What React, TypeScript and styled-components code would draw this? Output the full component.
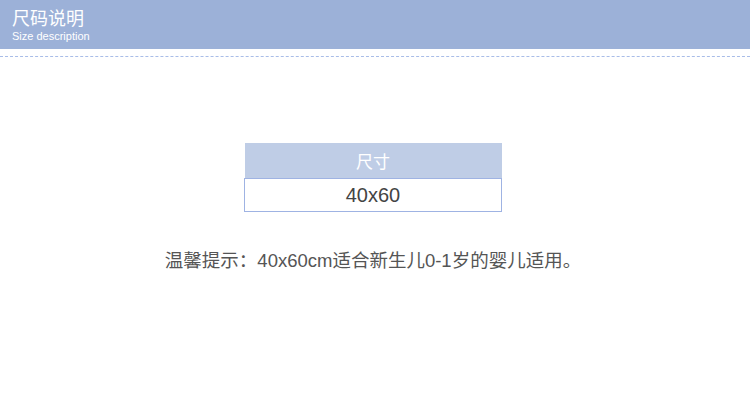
import styled, { createGlobalStyle } from 'styled-components'

const GlobalStyle = createGlobalStyle`
  html, body {
    margin: 0;
    padding: 0;
    background: #ffffff;
  }
  body {
    font-family: "Liberation Sans", Arial, "Noto Sans CJK SC", sans-serif;
  }
`

const Page = styled.div`
  width: 750px;
  height: 407px;
  background: #ffffff;
  overflow: hidden;
`

const Banner = styled.header`
  height: 49px;
  box-sizing: border-box;
  padding: 5px 12px 0;
  background-color: #9cb1d8;
  color: #ffffff;
  display: flex;
  flex-direction: column;
`

const Title = styled.h1`
  margin: 0;
  font-size: 18px;
  line-height: 24px;
  font-weight: normal;
  font-family: "Noto Sans CJK SC", sans-serif;
`

const Subtitle = styled.span`
  font-size: 11px;
  line-height: 14px;
`

const Divider = styled.div`
  margin-top: 7px;
  border-top: 1px dashed #a9bde8;
`

const Content = styled.main`
  display: flex;
  flex-direction: column;
  align-items: center;
  padding-top: 86px;
  padding-right: 4px;
`

const SizeTable = styled.table`
  width: 258px;
  border-collapse: collapse;
  text-align: center;
`

const HeadCell = styled.th`
  height: 35px;
  padding: 0;
  background-color: #bfcde6;
  color: #ffffff;
  font-size: 17px;
  font-weight: normal;
  font-family: "Noto Sans CJK SC", sans-serif;
`

const BodyCell = styled.td`
  height: 32px;
  padding: 0;
  border: 1px solid #9fb3e3;
  color: #444444;
  font-size: 20px;
`

const Tip = styled.p`
  margin: 38px 0 0;
  color: #555555;
  font-size: 18.5px;
  line-height: 22px;
  font-family: "Liberation Sans", "Noto Sans CJK SC", sans-serif;
`

export default function App() {
  return (
    <Page>
      <GlobalStyle />
      <Banner>
        <Title>{'尺码说明'}</Title>
        <Subtitle>{'Size description'}</Subtitle>
      </Banner>
      <Divider />
      <Content>
        <SizeTable>
          <thead>
            <tr>
              <HeadCell>{'尺寸'}</HeadCell>
            </tr>
          </thead>
          <tbody>
            <tr>
              <BodyCell>{'40x60'}</BodyCell>
            </tr>
          </tbody>
        </SizeTable>
        <Tip>{'温馨提示：40x60cm适合新生儿0-1岁的婴儿适用。'}</Tip>
      </Content>
    </Page>
  )
}
